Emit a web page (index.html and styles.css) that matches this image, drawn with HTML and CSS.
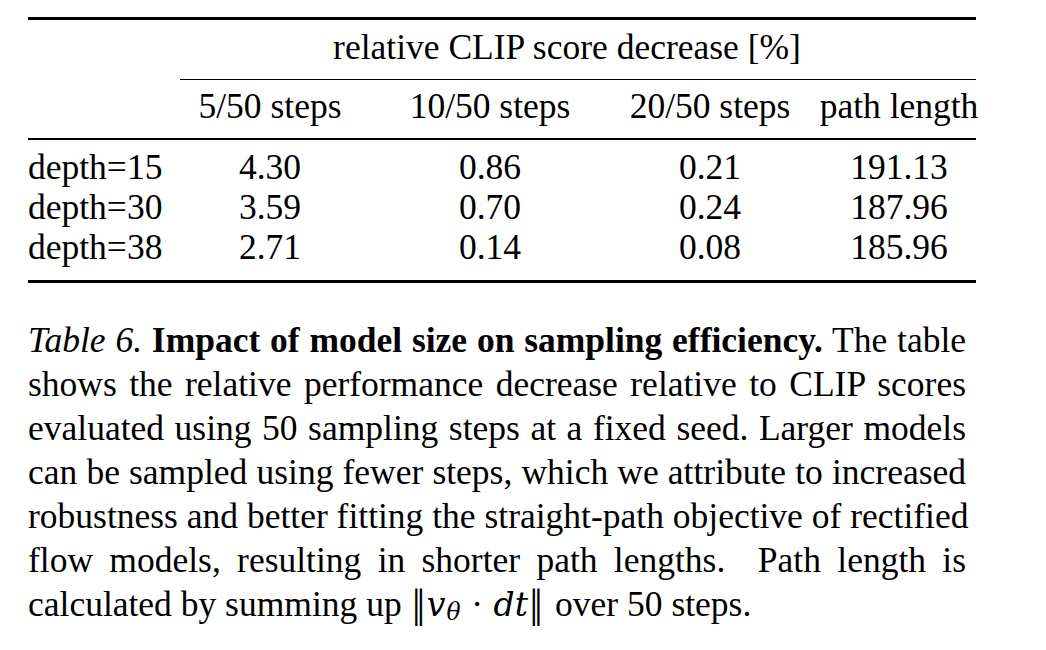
FILE: index.html
```html
<!DOCTYPE html>
<html>
<head>
<meta charset="utf-8">
<link rel="stylesheet" href="styles.css">
</head>
<body>
<div class="page">
  <div class="table">
    <div class="row super">
      <div class="cell stub"></div>
      <div class="cell span">relative CLIP score decrease [%]</div>
    </div>
    <div class="row head">
      <div class="cell stub"></div>
      <div class="cell c">5/50 steps</div>
      <div class="cell c">10/50 steps</div>
      <div class="cell c">20/50 steps</div>
      <div class="cell c last">path length</div>
    </div>
    <div class="body">
      <div class="row">
        <div class="cell stub">depth=15</div>
        <div class="cell c">4.30</div>
        <div class="cell c">0.86</div>
        <div class="cell c">0.21</div>
        <div class="cell c last">191.13</div>
      </div>
      <div class="row">
        <div class="cell stub">depth=30</div>
        <div class="cell c">3.59</div>
        <div class="cell c">0.70</div>
        <div class="cell c">0.24</div>
        <div class="cell c last">187.96</div>
      </div>
      <div class="row">
        <div class="cell stub">depth=38</div>
        <div class="cell c">2.71</div>
        <div class="cell c">0.14</div>
        <div class="cell c">0.08</div>
        <div class="cell c last">185.96</div>
      </div>
    </div>
  </div>
  <div class="caption">
    <span class="line"><i>Table 6.</i> <b>Impact of model size on sampling efficiency.</b> The table</span>
    <span class="line">shows the relative performance decrease relative to CLIP scores</span>
    <span class="line">evaluated using 50 sampling steps at a fixed seed. Larger models</span>
    <span class="line">can be sampled using fewer steps, which we attribute to increased</span>
    <span class="line">robustness and better fitting the straight-path objective of rectified</span>
    <span class="line">flow models, resulting in shorter path lengths.&nbsp; Path length is</span>
    <span class="line end">calculated by summing up <span class="math"><span class="m norm">‖</span><span class="m mi">v</span><span class="m msub">θ</span><span class="m mop">·</span><span class="m mi">dt</span><span class="m norm close">‖</span></span> over 50 steps.</span>
  </div>
</div>
</body>
</html>
```

FILE: styles.css
```css
html, body {
  margin: 0;
  padding: 0;
  background: #ffffff;
}

body {
  font-family: "Liberation Serif", "Times New Roman", serif;
  font-size: 35.5px;
  color: #000000;
}

.page {
  padding: 17px 0 0 28px;
}

.table {
  width: 948px;
  border-top: 3px solid #000;
  border-bottom: 3px solid #000;
}

.row {
  display: grid;
  grid-template-columns: 152px 180px 260px 180px 176px;
  line-height: 40px;
  white-space: nowrap;
}

.super {
  grid-template-columns: 152px 796px;
  padding-top: 7px;
}

.super .span {
  padding-right: 22px;
  padding-bottom: 12px;
  border-bottom: 1px solid #000;
  display: flex;
  justify-content: center;
}

.head {
  padding-top: 6px;
  padding-bottom: 12px;
  border-bottom: 2px solid #000;
}

.body {
  padding-top: 7px;
  padding-bottom: 13px;
}

.cell.c {
  display: flex;
  justify-content: center;
}

.cell.last {
  padding-left: 22px;
}

.caption {
  margin-top: 35px;
  width: 938px;
  line-height: 44px;
}

.caption .line {
  display: block;
  text-align: justify;
  text-align-last: justify;
  white-space: nowrap;
}

.caption .line.end {
  text-align: left;
  text-align-last: left;
}

/* inline math: ‖v_θ · dt‖ */
.math .m {
  display: inline-block;
  line-height: 1;
}

.math .mi,
.math .msub {
  font-family: "DejaVu Serif", serif;
  font-style: italic;
  font-weight: 300;
  font-size: 0.93em;
}

.math .norm {
  font-family: "DejaVu Serif", serif;
  font-size: 0.8em;
  transform: scaleY(1.45);
  padding: 0 1px;
}

.math .close {
  margin-right: 2px;
}

.math .msub {
  font-size: 0.66em;
  vertical-align: -4px;
  padding-left: 1px;
}

.math .mop {
  padding: 0 0.3em;
}
```
